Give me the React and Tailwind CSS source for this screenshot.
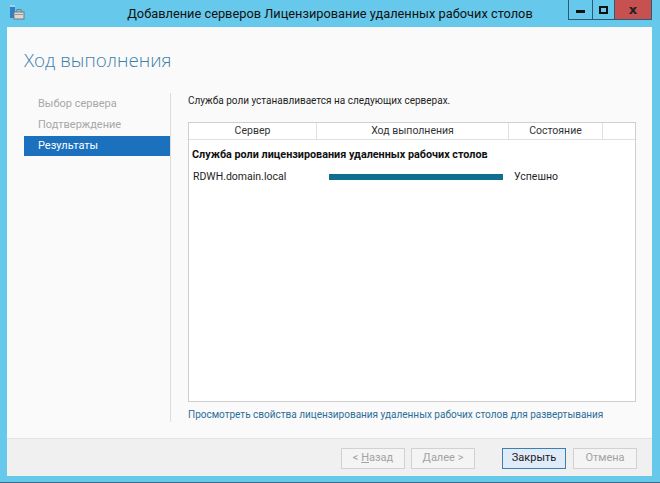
import React from 'react'

const font = { fontFamily: 'Roboto, "Open Sans", sans-serif' }

const AppIcon = () => (
  <svg width="16" height="16" viewBox="0 0 16 16" className="shrink-0">
    <rect x="1" y="1" width="5" height="13" fill="#2f7fc4" />
    <rect x="1" y="1" width="5" height="2" fill="#9fd0f0" />
    <rect x="5" y="8" width="10" height="7" fill="#d8d8d8" stroke="#7a7a7a" strokeWidth="1" />
    <path d="M7 8 L8 5.5 L12 5.5 L13 8" fill="none" stroke="#7a7a7a" strokeWidth="1" />
    <rect x="6" y="10" width="8" height="1" fill="#9a9a9a" />
  </svg>
)

const WinButton = ({ children, className }) => (
  <div className={`h-[20px] flex items-center justify-center border border-t-0 border-[#2c5b73] ${className}`}>
    {children}
  </div>
)

const Button = ({ children, primary }) => (
  <button
    className={`w-[64px] h-[21px] text-[11px] border ${primary ? 'bg-[#dfebf8] border-[#3c7fb1] text-[#1a1a1a]' : 'bg-[#f4f4f4] border-[#d1d1d1] text-[#a3a3a3]'}`}
  >
    {children}
  </button>
)

export default function App() {
  return (
    <div className="w-[660px] h-[483px] bg-[#66c9eb] flex flex-col border-b border-[#3a6a80]" style={font}>
      {/* title bar */}
      <div className="h-[27px] flex items-start shrink-0">
        <div className="w-[92px] pl-[9px] pt-[4px]">
          <AppIcon />
        </div>
        <div className="flex-1 pt-[4px] text-[12.8px] text-[#111] whitespace-nowrap text-center">
          Добавление серверов Лицензирование удаленных рабочих столов
        </div>
        <div className="w-[92px] flex justify-end pr-[8px]">
          <WinButton className="w-[25px] bg-[#66c9eb]">
            <div className="w-[9px] h-[3px] bg-[#111] mt-[4px]" />
          </WinButton>
          <WinButton className="w-[22px] bg-[#66c9eb] border-l-0">
            <div className="w-[9px] h-[8px] border-2 border-[#111]" />
          </WinButton>
          <WinButton className="w-[37px] bg-[#c75050] border-l-0">
            <span className="text-[13px] font-bold text-[#222] leading-none" style={{ fontFamily: '"DejaVu Sans", sans-serif' }}>x</span>
          </WinButton>
        </div>
      </div>

      {/* client area */}
      <div className="flex-1 w-[645px] flex flex-col ml-[7px] mb-[6px] bg-[#fafafa]">
        <div className="h-[66px] shrink-0 pl-[17px] pt-[19px]">
          <div className="text-[18.8px] font-light text-[#3d7fab] leading-[28px]" style={{ fontFamily: '"Open Sans", sans-serif' }}>
            Ход выполнения
          </div>
        </div>

        <div className="flex-1 flex">
          {/* nav */}
          <div className="w-[163px] shrink-0 pt-[1px] text-[11px]">
            <div className="h-[21px] flex items-center pl-[31px] text-[#a8a8a8]">Выбор сервера</div>
            <div className="h-[21px] flex items-center pl-[31px] text-[#a8a8a8]">Подтверждение</div>
            <div className="h-[20px] ml-[17px] flex items-center pl-[14px] bg-[#1b71bd] text-white">Результаты</div>
          </div>
          <div className="w-px h-[329px] bg-[#dcdcdc] shrink-0" />

          {/* main pane */}
          <div className="w-[481px] flex flex-col pl-[17px] text-[10px] text-[#1e1e1e]">
            <div className="h-[15px] leading-[15px]">Служба роли устанавливается на следующих серверах.</div>
            <div className="mt-[14px] w-[448px] h-[280px] border border-[#cfcfcf] bg-white flex flex-col text-[10.5px]">
              <div className="h-[17px] flex border-b border-[#e0e0e0] text-[#333]">
                <div className="w-[128px] flex items-center justify-center border-r border-[#e0e0e0]">Сервер</div>
                <div className="w-[192px] flex items-center justify-center border-r border-[#e0e0e0]">Ход выполнения</div>
                <div className="w-[94px] flex items-center justify-center border-r border-[#e0e0e0]">Состояние</div>
                <div className="flex-1" />
              </div>
              <div className="h-[22px] flex items-center pl-[3px] pt-[8px] font-bold text-[10.8px] text-[#111]">
                Служба роли лицензирования удаленных рабочих столов
              </div>
              <div className="h-[21px] flex items-center pt-[8px]">
                <div className="w-[140px] pl-[4px]">RDWH.domain.local</div>
                <div className="w-[174px] h-[6px] bg-[#0f6f8f]" />
                <div className="pl-[11px]">Успешно</div>
              </div>
            </div>
            <div className="mt-[6px] h-[14px] leading-[14px] text-[#2a6e99] whitespace-nowrap">
              Просмотреть свойства лицензирования удаленных рабочих столов для развертывания
            </div>
          </div>
        </div>

        {/* footer */}
        <div className="h-[38px] shrink-0 bg-[#f0f0f0] border-t border-[#e4e4e4] flex items-center justify-end pr-[15px] pt-[1px]">
          <div className="flex gap-[6px]">
            <Button>&lt; <span className="underline">Н</span>азад</Button>
            <Button><span className="underline">Д</span>алее &gt;</Button>
          </div>
          <div className="flex gap-[7px] ml-[27px]">
            <Button primary>Закрыть</Button>
            <Button>Отмена</Button>
          </div>
        </div>
      </div>
    </div>
  )
}
